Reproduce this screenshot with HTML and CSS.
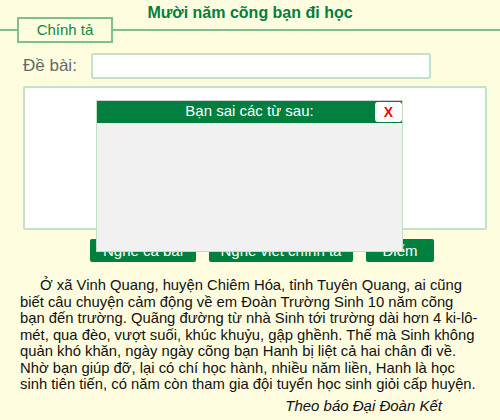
FILE: index.html
```html
<!DOCTYPE html>
<html lang="vi">
<head>
  <meta charset="UTF-8" />
  <meta name="viewport" content="width=device-width, initial-scale=1.0"/>
  <title>Chính tả</title>
  <link rel="stylesheet" href="styles.css">
</head>
<body>
  <div class="page">
    <header class="head">
      <h1 class="title">Mười năm cõng bạn đi học</h1>
      <div class="tab-row"><span class="tab">Chính tả</span></div>
    </header>

    <div class="topic-row">
      <label class="topic-label" for="topic">Đề bài:</label>
      <input class="topic-input" id="topic" type="text">
    </div>

    <div class="answer-box"></div>

    <div class="actions">
      <button class="btn btn-replay">Nghe cả bài</button>
      <button class="btn btn-dictate">Nghe viết chính tả</button>
      <button class="btn btn-score">Điểm</button>
    </div>

    <p class="story">Ở xã Vinh Quang, huyện Chiêm Hóa, tỉnh Tuyên Quang, ai cũng biết câu chuyện cảm động về em Đoàn Trường Sinh 10 năm cõng bạn đến trường. Quãng đường từ nhà Sinh tới trường dài hơn 4 ki-lô-mét, qua đèo, vượt suối, khúc khuỷu, gập ghềnh. Thế mà Sinh không quản khó khăn, ngày ngày cõng bạn Hanh bị liệt cả hai chân đi về. Nhờ bạn giúp đỡ, lại có chí học hành, nhiều năm liền, Hanh là học sinh tiên tiến, có năm còn tham gia đội tuyển học sinh giỏi cấp huyện.</p>
    <p class="source">Theo báo Đại Đoàn Kết</p>

    <!-- popup listing wrong words -->
    <div class="dialog">
      <div class="dialog-head">
        <span>Bạn sai các từ sau:</span>
        <button class="dialog-close">X</button>
      </div>
      <div class="dialog-body"></div>
    </div>
  </div>
</body>
</html>
```

FILE: styles.css
```css
body {
  margin: 0;
  background: #fffddf;
  font-family: 'Liberation Sans', Arial, sans-serif;
  color: #111;
}

.page {
  position: relative;
  width: 500px;
  height: 420px;
  overflow: hidden;
}

/* title and tab share one grid cell */
.head {
  display: grid;
}

.title {
  grid-area: 1 / 1;
  margin: 0;
  padding-top: 4px;
  text-align: center;
  font-size: 16px;
  font-weight: bold;
  color: #007f3f;
}

.tab-row {
  grid-area: 1 / 1;
  margin-top: 17px;
  display: flex;
  align-items: center;
}

.tab-row::before,
.tab-row::after {
  content: '';
  height: 2px;
  background: #80c08f;
}

.tab-row::before {
  width: 17px;
}

.tab-row::after {
  flex: 1;
}

.tab {
  box-sizing: border-box;
  width: 96px;
  height: 26px;
  line-height: 22px;
  border: 2px solid #80c08f;
  text-align: center;
  font-size: 15px;
  color: #0e8a45;
}

.topic-row {
  display: flex;
  align-items: center;
  margin-top: 10px;
  padding-left: 23px;
}

.topic-label {
  width: 68px;
  font-size: 17px;
  color: #666;
}

.topic-input {
  box-sizing: border-box;
  width: 340px;
  height: 26px;
  margin: 0;
  border: 2px solid #c2e3c9;
  border-radius: 2px;
  background: #fff;
}

.answer-box {
  box-sizing: border-box;
  width: 464px;
  height: 144px;
  margin: 7px 0 0 23px;
  border: 2px solid #c2e3c9;
  border-radius: 2px;
  background: #fff;
}

.actions {
  display: flex;
  gap: 13px;
  margin: 9px 0 0 90px;
}

.btn {
  height: 23px;
  padding: 0;
  border: none;
  border-radius: 2px;
  background: #00803f;
  color: #fff;
  font-family: inherit;
  font-size: 15px;
}

.btn-replay { width: 106px; }
.btn-dictate { width: 144px; }
.btn-score { width: 68px; }

.story {
  margin: 15px 19px 0 20px;
  text-indent: 20px;
  font-size: 14.8px;
  line-height: 16.5px;
}

.source {
  margin: 4px 58px 0 0;
  text-align: right;
  font-size: 15px;
  font-style: italic;
}

.dialog {
  position: absolute;
  top: 100px;
  left: 96px;
  box-sizing: border-box;
  width: 307px;
  height: 152px;
  display: flex;
  flex-direction: column;
  border: 1px solid #bfe0c7;
  border-top-color: #cfcfcf;
  background: #f1f1f1;
}

.dialog-head {
  position: relative;
  height: 22px;
  background: #007f3f;
  color: #fff;
  font-size: 15px;
  line-height: 20px;
  text-align: center;
}

.dialog-close {
  position: absolute;
  top: 1px;
  right: 0;
  width: 27px;
  height: 20px;
  padding: 0;
  border: none;
  border-radius: 3px;
  background: #fff;
  color: #f00;
  font-family: inherit;
  font-size: 14px;
  font-weight: bold;
}

.dialog-body {
  flex: 1;
}
```
